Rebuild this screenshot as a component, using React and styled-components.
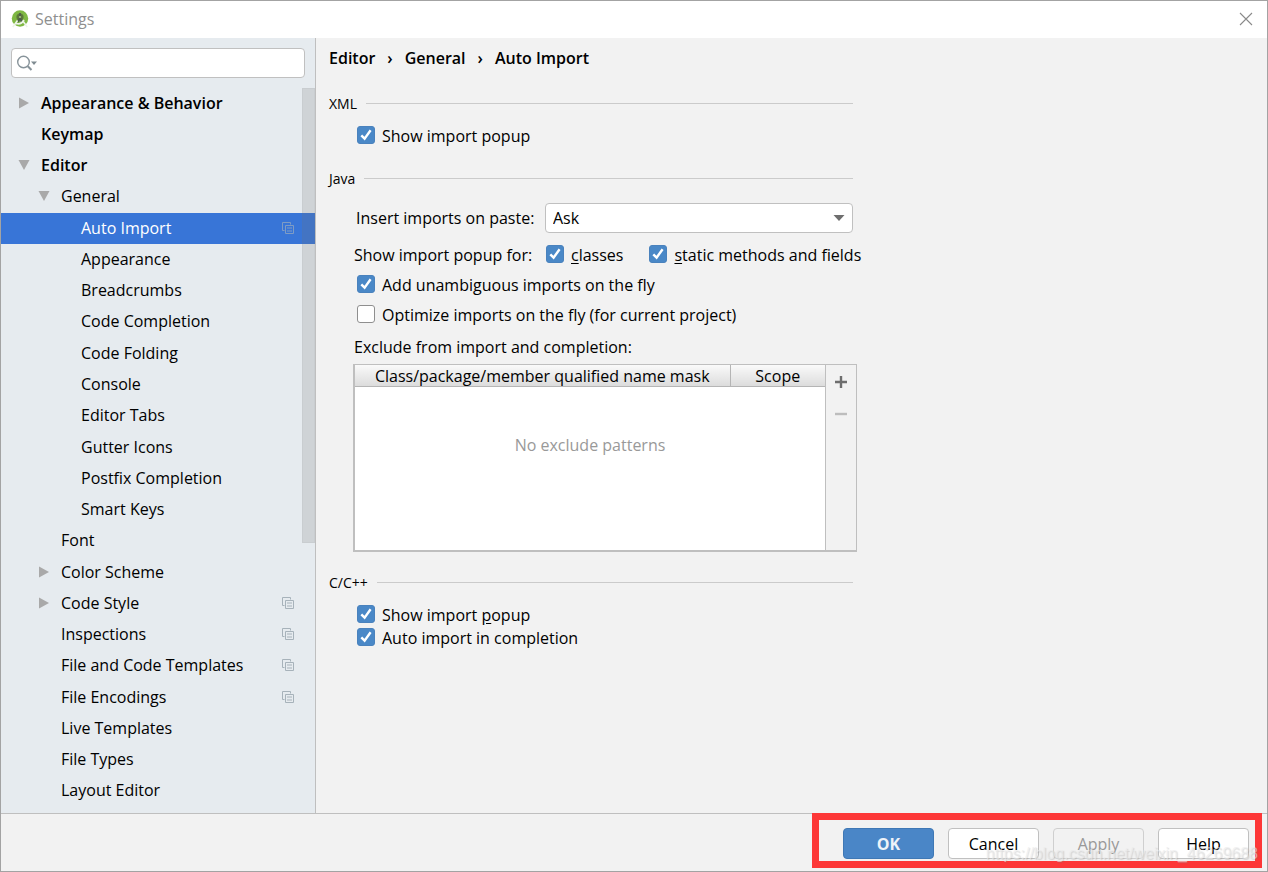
import React, { useId, useState } from 'react'
import styled, { createGlobalStyle, css } from 'styled-components'

const TREE = [
  { label: 'Appearance & Behavior', level: 0, arrow: 'right' },
  { label: 'Keymap', level: 0 },
  { label: 'Editor', level: 0, arrow: 'down' },
  { label: 'General', level: 1, arrow: 'down' },
  { label: 'Auto Import', level: 2, project: true },
  { label: 'Appearance', level: 2 },
  { label: 'Breadcrumbs', level: 2 },
  { label: 'Code Completion', level: 2 },
  { label: 'Code Folding', level: 2 },
  { label: 'Console', level: 2 },
  { label: 'Editor Tabs', level: 2 },
  { label: 'Gutter Icons', level: 2 },
  { label: 'Postfix Completion', level: 2 },
  { label: 'Smart Keys', level: 2 },
  { label: 'Font', level: 1 },
  { label: 'Color Scheme', level: 1, arrow: 'right' },
  { label: 'Code Style', level: 1, arrow: 'right', project: true },
  { label: 'Inspections', level: 1, project: true },
  { label: 'File and Code Templates', level: 1, project: true },
  { label: 'File Encodings', level: 1, project: true },
  { label: 'Live Templates', level: 1 },
  { label: 'File Types', level: 1 },
  { label: 'Layout Editor', level: 1 },
]

function AppLogo() {
  return (
    <svg width="18" height="18" viewBox="0 0 18 18" aria-hidden="true">
      <circle cx="9" cy="8.5" r="8.2" fill="#7fb843" />
      <circle cx="9" cy="7" r="3.6" fill="#5c7a3a" />
      <path d="M9 3v3M9 8l-2 4M9 8l2 4" stroke="#4f5b4c" strokeWidth="1.8" fill="none" />
      <circle cx="9" cy="7" r="1" fill="#a9c98a" />
      <path d="M6.500 10.500L1.800 17M11.500 10.500l4.700 6.500M5 13.500c3 1 6 0 8-3.500" stroke="#eef3ea" strokeWidth="1.6" fill="none" />
    </svg>
  )
}

function SearchIcon() {
  return (
    <svg width="22" height="18" viewBox="0 0 22 18" aria-hidden="true">
      <circle cx="6.500" cy="8" r="5.800" fill="none" stroke="#87939a" strokeWidth="1.4" />
      <path d="M10.800 12.300L14.500 16" stroke="#87939a" strokeWidth="2" />
      <path d="M14 7.500h6L17 11z" fill="#7f8b91" />
    </svg>
  )
}

function ProjectIcon() {
  return (
    <svg width="12" height="12" viewBox="0 0 12 12" aria-hidden="true">
      <path d="M2.500 8.500h-2v-8h8v2" fill="none" stroke="currentColor" />
      <path d="M3.500 3.500h8v8h-8z" fill="none" stroke="currentColor" />
      <path d="M5 6h5M5 9h5" stroke="currentColor" />
    </svg>
  )
}

function TreeArrow({ direction }) {
  return (
    <svg width="12" height="12" viewBox="0 0 12 12" aria-hidden="true">
      <path d={direction === 'down' ? 'M.5 1h11L6 11z' : 'M1 .5v11L11 6z'} fill="#a9a9a9" />
    </svg>
  )
}

function Check({ children, defaultChecked }) {
  const id = useId()
  return (
    <CheckLabel htmlFor={id}>
      <CheckBox>
        <input id={id} type="checkbox" defaultChecked={defaultChecked} />
        <svg width="18" height="18" viewBox="0 0 18 18" aria-hidden="true">
          <path d="M4.300 9.300L7.600 12.600L13.600 4.300" fill="none" stroke="#fff" strokeWidth="2.400" />
        </svg>
      </CheckBox>
      <span>{children}</span>
    </CheckLabel>
  )
}

function Sidebar() {
  const [selected, setSelected] = useState('Auto Import')
  return (
    <SidebarStyled>
      <SearchBox>
        <SearchIcon />
        <input type="text" aria-label="Search settings" />
      </SearchBox>
      <Tree>
        {TREE.map(({ label, level, arrow, project }) => (
          <li key={label}>
            <TreeRow
              type="button"
              $level={level}
              $selected={selected === label}
              onClick={() => setSelected(label)}
            >
              <ArrowSlot>{arrow && <TreeArrow direction={arrow} />}</ArrowSlot>
              <RowText>{label}</RowText>
              {project && <ProjectIcon />}
            </TreeRow>
          </li>
        ))}
        <Scrollbar aria-hidden="true" />
      </Tree>
    </SidebarStyled>
  )
}

function ExcludeTable() {
  return (
    <ExcludeBox>
      <table>
        <thead>
          <tr>
            <th scope="col">Class/package/member qualified name mask</th>
            <th scope="col">Scope</th>
          </tr>
        </thead>
        <tbody>
          <tr>
            <td colSpan="2">No exclude patterns</td>
          </tr>
        </tbody>
      </table>
      <TableTools>
        <button type="button" aria-label="Add">
          <svg width="14" height="14" viewBox="0 0 14 14">
            <path d="M7 1v12M1 7h12" stroke="#6e6e6e" strokeWidth="2.400" />
          </svg>
        </button>
        <button type="button" aria-label="Remove" disabled>
          <svg width="14" height="14" viewBox="0 0 14 14">
            <path d="M1 7h12" stroke="#bdbdbd" strokeWidth="2.400" />
          </svg>
        </button>
      </TableTools>
    </ExcludeBox>
  )
}

function App() {
  return (
    <>
      <GlobalStyle />
      <Window>
        <TitleBar>
          <AppLogo />
          <h1>Settings</h1>
          <CloseButton type="button" aria-label="Close">
            <svg width="14" height="14" viewBox="0 0 14 14">
              <path d="M1 1l12 12M13 1L1 13" stroke="#8a8a8a" strokeWidth="1.100" />
            </svg>
          </CloseButton>
        </TitleBar>
        <Body>
          <Sidebar />
          <Content>
            <Breadcrumbs>
              <span>Editor</span>
              <Chevron />
              <span>General</span>
              <Chevron />
              <span>Auto Import</span>
            </Breadcrumbs>

            <Group>
              <GroupTitle>XML</GroupTitle>
              <Options>
                <Check defaultChecked>Show import popup</Check>
              </Options>
            </Group>

            <Group>
              <GroupTitle>Java</GroupTitle>
              <PasteRow>
                <label htmlFor="paste">Insert imports on paste:</label>
                <Combo>
                  <select id="paste" defaultValue="Ask">
                    <option>All</option>
                    <option>Ask</option>
                    <option>None</option>
                  </select>
                  <svg width="12" height="8" viewBox="0 0 12 8" aria-hidden="true">
                    <path d="M.5 1h11L6 7z" fill="#6e6e6e" />
                  </svg>
                </Combo>
              </PasteRow>
              <PopupRow>
                <span>Show import popup for:</span>
                <Check defaultChecked><u>c</u>lasses</Check>
                <Check defaultChecked><u>s</u>tatic methods and fields</Check>
              </PopupRow>
              <Options $spaced>
                <Check defaultChecked>Add unambiguous imports on the fly</Check>
                <Check>Optimize imports on the fly (for current project)</Check>
              </Options>
              <ExcludeTitle>Exclude from import and completion:</ExcludeTitle>
              <ExcludeTable />
            </Group>

            <Group>
              <GroupTitle>C/C++</GroupTitle>
              <Options>
                <Check defaultChecked>Show import <u>p</u>opup</Check>
                <Check defaultChecked>Auto import in completion</Check>
              </Options>
            </Group>
          </Content>
        </Body>
        <Footer>
          <Button type="button" $primary>OK</Button>
          <Button type="button">Cancel</Button>
          <Button type="button" disabled>Apply</Button>
          <Button type="button">Help</Button>
          <Highlight />
          <Watermark>https://blog.csdn.net/weixin_46269688</Watermark>
        </Footer>
      </Window>
    </>
  )
}

const GlobalStyle = createGlobalStyle`
  *{
    box-sizing:border-box;
  }
  body{
    margin:0;
    background:#f2f2f2;
    color:#000;
    font:16px/24px "Open Sans", "Noto Sans", sans-serif;
  }
  button, input, select{
    font:inherit;
    color:inherit;
  }
  u{
    text-underline-offset:2px;
  }
`;

const Window = styled.div`
  display:flex;
  flex-direction:column;
  min-height:100vh;
  border:1px solid #a3a3a3;
`;

const TitleBar = styled.header`
  display:flex;
  align-items:center;
  gap:6px;
  height:37px;
  padding:0 14px 1px 10px;
  background:#fff;
  h1{
    flex:1;
    margin:0;
    font-size:16px;
    font-weight:400;
    color:#8f8f8f;
  }
`;

const CloseButton = styled.button`
  display:flex;
  padding:0;
  border:0;
  background:none;
`;

const Body = styled.div`
  display:flex;
  flex:1;
`;

const SidebarStyled = styled.aside`
  display:flex;
  flex-direction:column;
  flex:0 0 315px;
  border-right:1px solid #bfbfbf;
  background:#e6ebef;
`;

const SearchBox = styled.div`
  display:flex;
  align-items:center;
  height:30px;
  margin:10px 10px 9px;
  padding:0 5px;
  border:1px solid #c0c0c0;
  border-radius:4px;
  background:#fff;
  input{
    flex:1;
    min-width:0;
    border:0;
    outline:0;
    background:none;
  }
`;

const Tree = styled.ul`
  position:relative;
  display:flex;
  flex-direction:column;
  flex:1;
  margin:0;
  padding:1px 0 6px;
  list-style:none;
  li{
    display:flex;
    flex:1;
    min-height:28px;
  }
`;

const TreeRow = styled.button`
  display:flex;
  align-items:center;
  flex:1;
  padding:0 21px 2px ${p => 17 + p.$level * 20}px;
  border:0;
  background:${p => p.$selected ? '#3875d7' : 'none'};
  color:${p => p.$selected ? '#fff' : '#000'};
  font-weight:${p => p.$level === 0 ? 600 : 400};
  text-align:left;
  > svg{
    color:${p => p.$selected ? '#7f9cc4' : '#a7b2ba'};
  }
`;

const ArrowSlot = styled.span`
  display:flex;
  flex:0 0 23px;
`;

const RowText = styled.span`
  flex:1;
`;

const Scrollbar = styled.div`
  position:absolute;
  top:1px;
  right:0;
  width:13px;
  height:455px;
  border:1px solid rgba(115,115,115,.06);
  background:rgba(115,115,115,.2);
  pointer-events:none;
`;

const Content = styled.main`
  flex:1;
  min-width:0;
  padding:8px 13px;
`;

const Breadcrumbs = styled.nav`
  display:flex;
  align-items:center;
  gap:12px;
  margin-bottom:22px;
  font-weight:600;
`;

const Chevron = styled.span`
  &::before{
    content:"›";
  }
`;

const Group = styled.section`
  max-width:524px;
  & + &{
    margin-top:19px;
  }
`;

const GroupTitle = styled.h2`
  display:flex;
  align-items:center;
  gap:9px;
  margin:0;
  font-size:14px;
  font-weight:400;
  line-height:24px;
  &::after{
    content:"";
    flex:1;
    height:1px;
    margin-bottom:2px;
    background:#cbcbcb;
  }
`;

const Options = styled.div`
  display:flex;
  flex-direction:column;
  align-items:flex-start;
  gap:${p => p.$spaced ? 7 : 0}px;
  margin-top:${p => p.$spaced ? 7 : 9}px;
  padding-left:28px;
`;

const CheckLabel = styled.label`
  display:flex;
  align-items:center;
  gap:7px;
  line-height:23px;
  white-space:nowrap;
`;

const CheckBox = styled.span`
  display:grid;
  margin-bottom:3px;
  input, svg{
    grid-area:1 / 1;
  }
  input{
    appearance:none;
    width:18px;
    height:18px;
    margin:0;
    border:1px solid #8f8f8f;
    border-radius:3px;
    background:#fff;
  }
  input:checked{
    border-color:#4a82bd;
    background:#4a88c7;
  }
  svg{
    visibility:hidden;
    pointer-events:none;
  }
  input:checked + svg{
    visibility:visible;
  }
`;

const PasteRow = styled.div`
  display:flex;
  align-items:center;
  margin-top:12px;
  padding-left:27px;
  label{
    flex:0 0 189px;
  }
`;

const Combo = styled.div`
  display:grid;
  flex:1;
  align-items:center;
  select, svg{
    grid-area:1 / 1;
  }
  select{
    appearance:none;
    width:100%;
    height:30px;
    padding:0 7px;
    border:1px solid #c0c0c0;
    border-radius:4px;
    background:#fff;
  }
  svg{
    justify-self:end;
    margin-right:8px;
    pointer-events:none;
  }
`;

const PopupRow = styled.div`
  display:flex;
  align-items:center;
  margin-top:11px;
  padding-left:25px;
  line-height:23px;
  > span{
    flex:0 0 192px;
  }
  label + label{
    margin-left:26px;
  }
`;

const ExcludeTitle = styled.div`
  margin-top:8px;
  padding-left:25px;
`;

const ExcludeBox = styled.div`
  display:flex;
  height:188px;
  margin:5px -4px 0 24px;
  border:1px solid #bfbfbf;
  border-width:1px 1px 2px 2px;
  table{
    flex:1;
    border-collapse:collapse;
    table-layout:fixed;
    background:#fff;
  }
  th{
    height:21px;
    padding:1px 0 0;
    border-bottom:1px solid #b5b5b5;
    background:linear-gradient(#fafafa, #dcdcdc);
    font-weight:400;
    line-height:20px;
  }
  th + th{
    width:95px;
    border-left:1px solid #b5b5b5;
  }
  td{
    padding:46px 0 0;
    color:#999;
    text-align:center;
    vertical-align:top;
  }
`;

const TableTools = styled.div`
  display:flex;
  flex-direction:column;
  flex:0 0 31px;
  padding-top:1px;
  border-left:1px solid #bfbfbf;
  button{
    display:flex;
    align-items:center;
    justify-content:center;
    height:32px;
    padding:0;
    border:0;
    background:none;
  }
`;

const Footer = styled.footer`
  position:relative;
  display:flex;
  justify-content:flex-end;
  gap:14px;
  height:58px;
  padding:14px 18px 0;
  border-top:1px solid #bfbfbf;
`;

const Button = styled.button`
  width:91px;
  height:31px;
  padding:0;
  border:1px solid #c0c0c0;
  border-radius:4px;
  background:#fff;
  ${p => p.$primary && css`
    border-color:#3f78b5;
    background:#4a86c7;
    color:#eef3f9;
    font-weight:700;
  `}
  &:disabled{
    border-color:#cfcfcf;
    background:#f2f2f2;
    color:#999;
  }
`;

const Highlight = styled.div`
  position:absolute;
  top:-1px;
  right:5px;
  width:450px;
  height:55px;
  border:7px solid #fd3737;
  pointer-events:none;
`;

const Watermark = styled.span`
  position:absolute;
  right:9px;
  bottom:5px;
  color:rgba(235,235,235,.6);
  font:16px/24px "Liberation Sans", sans-serif;
  text-shadow:1px 1px 1px rgba(120,120,120,.25);
  pointer-events:none;
`;

export default App
